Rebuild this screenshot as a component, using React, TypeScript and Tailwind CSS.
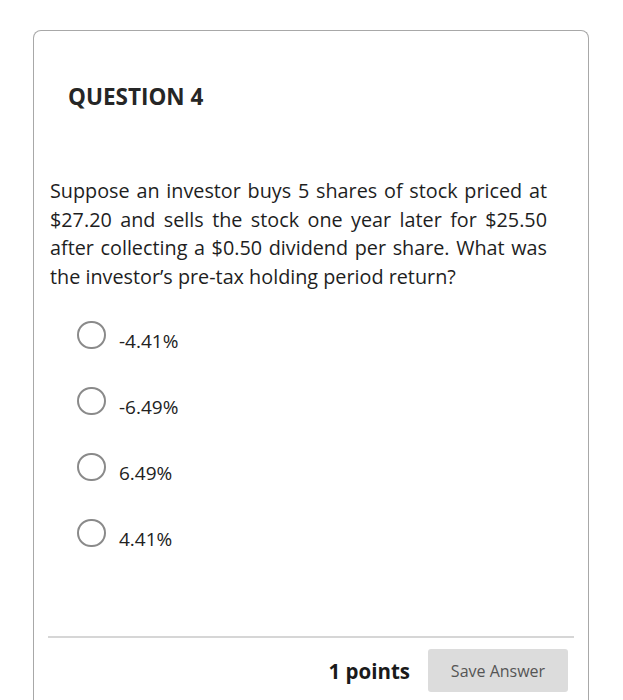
const OPTIONS = ['-4.41%', '-6.49%', '6.49%', '4.41%'];

export default function App() {
  return (
    <div className="min-h-[700px] bg-white pt-[30px] pl-[33px] font-['Open_Sans',sans-serif] text-[#222]">
      <div className="w-[556px] rounded-t-[8px] border border-b-0 border-[#a8a8a8] pb-[40px]">
        <h2 className="ml-[34px] mt-[50px] text-[22.5px] font-bold leading-[32px] text-[#262626]">QUESTION 4</h2>

        <p className="ml-[16px] mt-[64px] w-[497px] text-justify text-[19.8px] leading-[28.5px] text-[#1e1e1e]">
          Suppose an investor buys 5 shares of stock priced at $27.20 and sells the stock one year later for $25.50
          after collecting a $0.50 dividend per share. What was the investor’s pre-tax holding period return?
        </p>

        <ul className="ml-[43px] mt-[11px] flex flex-col">
          {OPTIONS.map(o => (
            <li key={o} className="flex h-[66px] items-center">
              <span className="h-[28px] w-[29px] shrink-0 rounded-full border-2 border-[#8a8a8a]" />
              <span className="ml-[13px] mt-[12px] text-[19px] leading-[24px] text-[#222]">{o}</span>
            </li>
          ))}
        </ul>

        <div className="mx-[14px] mt-[70px] border-t-2 border-[#d6d6d6]" />

        <div className="mt-[11px] mr-[20px] flex items-center justify-end">
          <span className="text-[20.5px] font-bold leading-[28px] text-[#1a1a1a]">1 points</span>
          <button className="ml-[18px] h-[43px] w-[140px] rounded-[3px] bg-[#dcdcdc] text-[16px] text-[#555]">
            Save Answer
          </button>
        </div>
      </div>
    </div>
  );
}
